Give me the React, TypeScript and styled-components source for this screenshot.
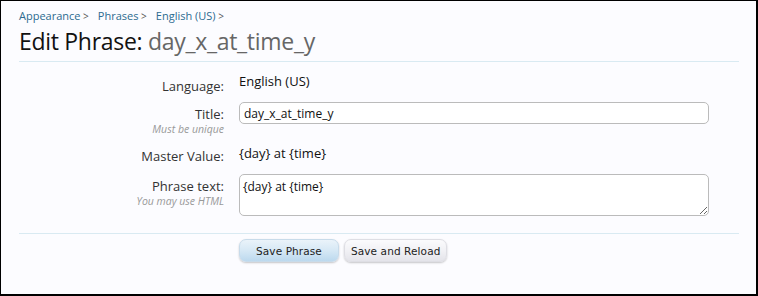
import React from 'react';
import styled, { createGlobalStyle } from 'styled-components';

const GlobalStyle = createGlobalStyle`
  html, body {
    margin: 0;
    padding: 0;
    background: #fcfcff;
  }
  * {
    box-sizing: border-box;
  }
`;

const Frame = styled.div`
  width: 758px;
  height: 296px;
  border-style: solid;
  border-color: #000;
  border-width: 1px 2px 2px 1px;
  background: #fcfcff;
  padding: 8px 17px 0 18px;
  font-family: 'Open Sans', 'Liberation Sans', sans-serif;
  color: #222;
  overflow: hidden;
`;

const Breadcrumb = styled.nav`
  display: flex;
  gap: 9px;
  font-size: 11px;
  line-height: 14px;
  height: 14px;
`;

const Crumb = styled.a`
  color: #2c6b8f;
  text-decoration: none;

  &::after {
    content: ' >';
    color: #555;
    font-size: 10px;
  }
`;

const Title = styled.h1`
  margin: 3px 0 0;
  padding-bottom: 5px;
  font-size: 23px;
  line-height: 30px;
  letter-spacing: -0.3px;
  font-weight: normal;
  color: #111;
  border-bottom: 1px solid #d9eaf2;
`;

const TitleItem = styled.span`
  color: #666;
`;

const Form = styled.form`
  display: flex;
  flex-direction: column;
`;

const Row = styled.div<{ $top: number }>`
  display: grid;
  grid-template-columns: 205px 470px;
  column-gap: 15px;
  margin-top: ${p => p.$top}px;
`;

const Label = styled.div<{ $pad: number }>`
  text-align: right;
  padding-top: ${p => p.$pad}px;
  font-size: 13px;
  line-height: 18px;
  color: #333;
`;

const Hint = styled.div`
  font-size: 10.5px;
  line-height: 12px;
  font-style: italic;
  color: #999;
`;

const Value = styled.div<{ $pad: number }>`
  padding-top: ${p => p.$pad}px;
  font-size: 13px;
  line-height: 18px;
  color: #111;
`;

const TextInput = styled.input`
  display: block;
  width: 470px;
  height: 22px;
  padding: 0 4px;
  border: 1px solid #bbb;
  border-radius: 5px;
  background: #fff;
  font-family: inherit;
  font-size: 12px;
  color: #111;
  outline: none;
`;

const TextArea = styled.textarea`
  display: block;
  width: 470px;
  height: 42px;
  padding: 3px 3px;
  border: 1px solid #bbb;
  border-radius: 5px;
  background: #fff;
  font-family: inherit;
  font-size: 12px;
  line-height: 18px;
  color: #111;
  outline: none;
`;

const Divider = styled.div`
  margin-top: 17px;
  border-top: 1px solid #d9eaf2;
`;

const Actions = styled.div`
  display: flex;
  gap: 5px;
  margin-top: 5px;
  padding-left: 220px;
`;

const Button = styled.button<{ $primary?: boolean }>`
  min-width: 100px;
  height: 23px;
  padding: 0 6px;
  border-radius: 7px;
  border: 1px solid ${p => (p.$primary ? '#c8dbea' : '#dedee4')};
  background: ${p =>
    p.$primary
      ? 'linear-gradient(to bottom, #eaf3fa 0%, #d6e8f5 50%, #bcd9ee 100%)'
      : 'linear-gradient(to bottom, #fbfbfd 0%, #f1f1f5 50%, #e4e4ea 100%)'};
  box-shadow: 0 1px 2px rgba(0, 0, 0, 0.22);
  font-family: 'DejaVu Sans', Verdana, sans-serif;
  font-size: 10.5px;
  letter-spacing: 0.1px;
  color: #222;
  cursor: pointer;
`;

export default function App() {
  return (
    <>
      <GlobalStyle />
      <Frame>
        <Breadcrumb>
          <Crumb href="#">Appearance</Crumb>
          <Crumb href="#">Phrases</Crumb>
          <Crumb href="#">English (US)</Crumb>
        </Breadcrumb>
        <Title>
          Edit Phrase: <TitleItem>day_x_at_time_y</TitleItem>
        </Title>
        <Form onSubmit={e => e.preventDefault()}>
          <Row $top={9}>
            <Label $pad={6}>Language:</Label>
            <Value $pad={1}>English (US)</Value>
          </Row>
          <Row $top={7}>
            <Label $pad={3}>
              Title:
              <Hint>Must be unique</Hint>
            </Label>
            <Value $pad={0}>
              <TextInput defaultValue="day_x_at_time_y" />
            </Value>
          </Row>
          <Row $top={9}>
            <Label $pad={3}>Master Value:</Label>
            <Value $pad={0}>{'{day} at {time}'}</Value>
          </Row>
          <Row $top={9}>
            <Label $pad={3}>
              Phrase text:
              <Hint>You may use HTML</Hint>
            </Label>
            <Value $pad={0}>
              <TextArea defaultValue="{day} at {time}" />
            </Value>
          </Row>
          <Divider />
          <Actions>
            <Button $primary type="submit">Save Phrase</Button>
            <Button type="button">Save and Reload</Button>
          </Actions>
        </Form>
      </Frame>
    </>
  );
}
